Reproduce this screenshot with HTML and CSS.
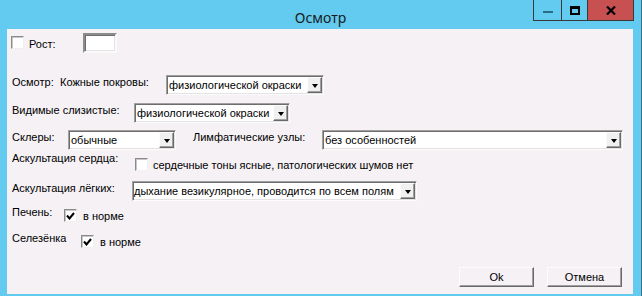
FILE: index.html
```
<!DOCTYPE html>
<html lang="ru">
<head>
    <meta charset="UTF-8">
    <title>Осмотр</title>
    <link rel="stylesheet" href="styles.css">
</head>
<body>
    <div class="window">
        <div class="titlebar">
            <div></div>
            <div class="caption">Осмотр</div>
            <div class="controls">
                <div class="ctl ctl-min"><span class="min-bar"></span></div>
                <div class="ctl ctl-max"><span class="max-box"></span></div>
                <div class="ctl ctl-close">
                    <svg width="10" height="9" viewBox="0 0 10 9"><path d="M1 0.5 L9 8.5 M9 0.5 L1 8.5" stroke="#000" stroke-width="2.2"/></svg>
                </div>
            </div>
        </div>

        <div class="client">
            <div class="row row-height">
                <span class="check"></span>
                <span class="label lbl-height">Рост:</span>
                <span class="edit"></span>
            </div>

            <div class="row row-skin">
                <span class="label lbl-exam">Осмотр:</span>
                <span class="label lbl-skin">Кожные покровы:</span>
                <div class="combo combo-skin"><span class="value">физиологической окраски</span><span class="drop"><i></i></span></div>
            </div>

            <div class="row row-mucosa">
                <span class="label lbl-mucosa">Видимые слизистые:</span>
                <div class="combo combo-mucosa"><span class="value">физиологической окраски</span><span class="drop"><i></i></span></div>
            </div>

            <div class="row row-sclera">
                <span class="label lbl-sclera">Склеры:</span>
                <div class="combo combo-sclera"><span class="value">обычные</span><span class="drop"><i></i></span></div>
                <span class="label lbl-lymph">Лимфатические узлы:</span>
                <div class="combo combo-lymph"><span class="value">без особенностей</span><span class="drop"><i></i></span></div>
            </div>

            <div class="row row-heart">
                <span class="label lbl-heart">Аскультация сердца:</span>
                <span class="check check-low"></span>
                <span class="opt">сердечные тоны ясные, патологических шумов нет</span>
            </div>

            <div class="row row-lungs">
                <span class="label lbl-lungs">Аскультация лёгких:</span>
                <div class="combo combo-lungs"><span class="value">дыхание везикулярное, проводится по всем полям</span><span class="drop"><i></i></span></div>
            </div>

            <div class="row row-liver">
                <span class="label lbl-liver">Печень:</span>
                <span class="check checked"><svg width="9" height="8" viewBox="0 0 9 8"><path d="M1 3.5 L3.5 6.5 L8 1" fill="none" stroke="#000" stroke-width="2"/></svg></span>
                <span class="opt opt-norm">в норме</span>
            </div>

            <div class="row row-spleen">
                <span class="label lbl-spleen">Селезёнка</span>
                <span class="check checked"><svg width="9" height="8" viewBox="0 0 9 8"><path d="M1 3.5 L3.5 6.5 L8 1" fill="none" stroke="#000" stroke-width="2"/></svg></span>
                <span class="opt opt-norm">в норме</span>
            </div>

            <div class="buttons">
                <button>Ok</button>
                <button>Отмена</button>
            </div>
        </div>
    </div>
</body>
</html>
```

FILE: styles.css
```
body {
    margin: 0;
    padding: 0;
    font-family: "Liberation Sans", Arial, sans-serif;
    font-size: 11px;
    color: #000;
}
.window {
    width: 641px;
    height: 296px;
    background-color: #62cbef;
    border-right: 1px solid #3c6f82;
    display: flex;
    flex-direction: column;
}

/* title bar */
.titlebar {
    height: 29px;
    display: grid;
    grid-template-columns: 1fr auto 1fr;
}
.caption {
    font-family: "Noto Sans", "Open Sans", sans-serif;
    font-size: 14px;
    line-height: 15px;
    padding-top: 10px;
    color: #1a1a1a;
}
.controls {
    justify-self: end;
    display: flex;
    height: 20px;
    margin-right: 7px;
    border: 1px solid #3a3a3a;
    border-top: none;
}
.ctl {
    display: flex;
    align-items: center;
    justify-content: center;
}
.ctl-min {
    width: 27px;
    border-right: 1px solid #3a3a3a;
}
.ctl-max {
    width: 25px;
    border-right: 1px solid #3a3a3a;
}
.ctl-close {
    width: 45px;
    background-color: #c75050;
}
.min-bar {
    width: 10px;
    height: 2px;
    margin-top: 4px;
    background-color: #2c6d85;
}
.max-box {
    width: 6px;
    height: 4px;
    border: 2px solid #000;
    border-top-width: 3px;
}

/* client area */
.client {
    flex: 1;
    margin: 0 8px 2px 7px;
    background-color: #f5f1f5;
    display: flex;
    flex-direction: column;
}
.row {
    display: flex;
    align-items: flex-start;
    padding-left: 5px;
}
.label {
    line-height: 14px;
    white-space: nowrap;
}
.opt {
    line-height: 14px;
    white-space: nowrap;
}

.check {
    width: 11px;
    height: 11px;
    background: #fff;
    border: 1px solid;
    border-color: #8a8a8a #f0f0f0 #f0f0f0 #8a8a8a;
    box-shadow: inset 1px 1px #c8c8c8;
    display: flex;
    align-items: center;
    justify-content: center;
}
.edit {
    width: 30px;
    height: 16px;
    background: #fff;
    border: 2px solid;
    border-color: #8c8c8c #fafafa #fafafa #8c8c8c;
    box-shadow: inset 1px 1px #6e6e6e, inset -1px -1px #e4e4e4;
}

.combo {
    height: 18px;
    display: flex;
    background: #fff;
    border: 1px solid;
    border-color: #a0a0a0 #fcfcfc #fcfcfc #a0a0a0;
    box-shadow: inset 1px 1px #6d6d6d, inset -1px -1px #e3e3e3;
}
.combo .value {
    flex: 1;
    line-height: 18px;
    padding-left: 2px;
    white-space: nowrap;
    overflow: hidden;
}
.combo .drop {
    width: 13px;
    height: 14px;
    margin: 1px 1px 0 0;
    background: #f0f0f0;
    border: 1px solid;
    border-color: #fcfcfc #696969 #696969 #fcfcfc;
    box-shadow: inset -1px -1px #a0a0a0;
    display: flex;
    align-items: center;
    justify-content: center;
}
.combo .drop i {
    width: 0;
    height: 0;
    border-left: 3.5px solid transparent;
    border-right: 3.5px solid transparent;
    border-top: 4px solid #000;
    margin-top: 1px;
}

/* row placement */
.row-height {
    margin-top: 4px;
    height: 20px;
    padding-left: 4px;
}
.row-height .check {
    margin-top: 3px;
}
.lbl-height {
    width: 54px;
    margin-left: 5px;
    margin-top: 4px;
}

.row-skin {
    margin-top: 22px;
    height: 20px;
}
.lbl-exam {
    width: 48px;
}
.lbl-skin {
    width: 106px;
}
.combo-skin {
    width: 156px;
}

.row-mucosa {
    margin-top: 8px;
    height: 20px;
}
.lbl-mucosa {
    width: 122px;
}
.combo-mucosa {
    width: 154px;
}

.row-sclera {
    margin-top: 7px;
    height: 20px;
}
.lbl-sclera {
    width: 56px;
}
.combo-sclera {
    width: 106px;
}
.lbl-lymph {
    width: 129px;
    margin-left: 17px;
}
.combo-lymph {
    width: 299px;
}

.row-heart {
    margin-top: 1px;
    height: 20px;
}
.lbl-heart {
    width: 123px;
}
.check-low {
    margin-top: 7px;
}
.row-heart .opt {
    margin-left: 5px;
    margin-top: 7px;
}

.row-lungs {
    margin-top: 10px;
    height: 20px;
}
.lbl-lungs {
    width: 120px;
}
.combo-lungs {
    width: 283px;
}
.combo-lungs .value {
    padding-left: 1px;
}

.row-liver {
    margin-top: 4px;
    height: 17px;
}
.lbl-liver {
    width: 52px;
}
.row-liver .check,
.row-spleen .check {
    margin-top: 4px;
}
.opt-norm {
    margin-left: 6px;
    margin-top: 4px;
}

.row-spleen {
    margin-top: 9px;
    height: 17px;
}
.lbl-spleen {
    width: 69px;
}

/* dialog buttons */
.buttons {
    margin-top: 19px;
    display: flex;
    justify-content: flex-end;
    gap: 13px;
    padding-right: 11px;
}
.buttons button {
    width: 75px;
    height: 20px;
    padding: 0;
    font-family: "Liberation Sans", Arial, sans-serif;
    font-size: 11px;
    color: #000;
    background-color: #f5f1f5;
    border: 1px solid;
    border-color: #fdfdfd #696969 #696969 #fdfdfd;
    box-shadow: inset -1px -1px #a0a0a0;
}
```
